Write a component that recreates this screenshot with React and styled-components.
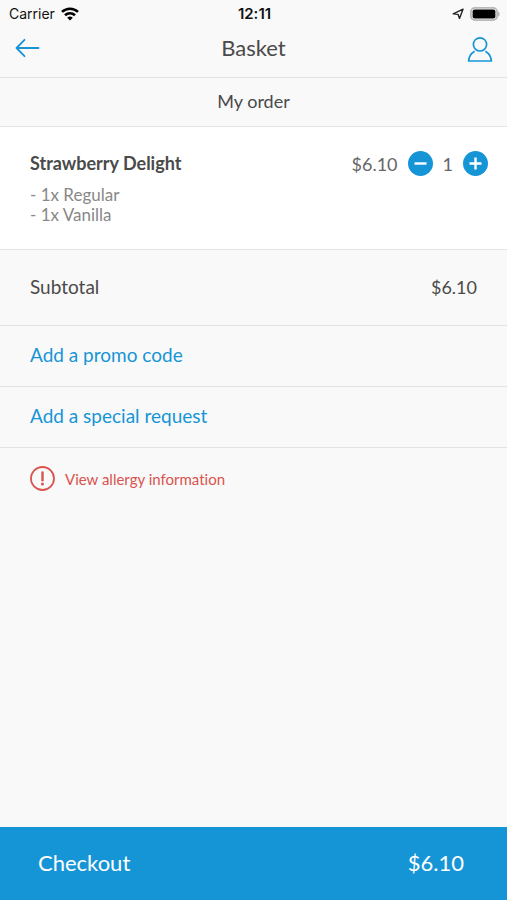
import React, { useState } from 'react';
import styled, { createGlobalStyle } from 'styled-components';

const BLUE = '#1695d6';
const PRICE = 6.1;

const GlobalStyle = createGlobalStyle`
  * {
    box-sizing: border-box;
  }
  body {
    margin: 0;
    background: #f9f9f9;
    color: #4a4a4a;
    font-family: Lato, "Noto Sans", sans-serif;
    font-size: 18px;
    font-variant-ligatures: none;
    line-height: 24px;
  }
  button {
    margin: 0;
    padding: 0;
    border: 0;
    background: none;
    color: inherit;
    font: inherit;
    cursor: pointer;
  }
  svg {
    display: block;
  }
`;

const Screen = styled.div`
  display: flex;
  flex-direction: column;
  min-height: 100vh;
`;

const StatusBar = styled.div`
  display: grid;
  grid-template-columns: 1fr auto 1fr;
  align-items: center;
  height: 28px;
  padding: 0 7px 0 9px;
  color: #111;
  font-family: Inter, sans-serif;
  font-size: 14px;
`;

const StatusSide = styled.div`
  display: flex;
  align-items: center;
  justify-content: ${props => (props.$end ? 'flex-end' : 'flex-start')};
  gap: 6px;
`;

const Clock = styled.span`
  font-size: 15px;
  font-weight: 600;
`;

const NavBar = styled.header`
  display: grid;
  grid-template-columns: 1fr auto 1fr;
  align-items: center;
  height: 50px;
  padding: 0 14px 10px;
  border-bottom: 1px solid #e4e4e4;
`;

const IconButton = styled.button`
  justify-self: ${props => (props.$end ? 'end' : 'start')};
  color: ${BLUE};
`;

const Title = styled.h1`
  margin: 0;
  font-size: 22px;
  font-weight: 400;
`;

const SectionTitle = styled.h2`
  margin: 0;
  padding: 11px 0 13px;
  border-bottom: 1px solid #e4e4e4;
  font-size: 18px;
  font-weight: 400;
  text-align: center;
`;

const Item = styled.section`
  display: flex;
  align-items: flex-start;
  justify-content: space-between;
  padding: 24px 19px 24px 30px;
  border-bottom: 1px solid #e4e4e4;
  background: #fff;
`;

const ItemName = styled.h3`
  margin: 0 0 10px;
  font-size: 18px;
  font-weight: 700;
`;

const Options = styled.ul`
  margin: 0;
  padding: 0;
  color: #888;
  font-size: 17px;
  line-height: 20px;
  list-style: none;
`;

const Quantity = styled.div`
  display: flex;
  align-items: center;
  gap: 10px;
  color: #666;
`;

const RoundButton = styled.button`
  display: grid;
  place-items: center;
  width: 25px;
  height: 25px;
  border-radius: 50%;
  background: ${BLUE};
  color: #fff;
`;

const SubtotalRow = styled.div`
  display: flex;
  align-items: center;
  justify-content: space-between;
  padding: 25px 30px 26px;
  border-bottom: 1px solid #e4e4e4;
`;

const SubtotalLabel = styled.span`
  font-size: 19px;
`;

const LinkRow = styled.button`
  padding: 17px 30px 19px;
  border-bottom: 1px solid #e4e4e4;
  color: ${BLUE};
  font-size: 19px;
  text-align: left;
`;

const Allergy = styled.button`
  display: flex;
  align-items: center;
  align-self: flex-start;
  gap: 10px;
  padding: 18px 30px;
  color: #d9534f;
  font-size: 15px;
`;

const Checkout = styled.button`
  display: flex;
  align-items: center;
  justify-content: space-between;
  margin-top: auto;
  padding: 24px 43px 25px 38px;
  background: ${BLUE};
  color: #fff;
  font-size: 22px;
`;

const money = value => `$${value.toFixed(2)}`;

function WifiIcon() {
  return (
    <svg width="18" height="14" viewBox="0 0 18 14" fill="none" stroke="#000" strokeWidth="2.6">
      <path d="M1 4.9a11.6 11.6 0 0 1 16 0" />
      <path d="M4 8.2a7.2 7.2 0 0 1 10 0" />
      <path d="M9 13.6 6.2 10.8a4 4 0 0 1 5.6 0z" fill="#000" stroke="none" />
    </svg>
  );
}

function LocationIcon() {
  return (
    <svg width="12" height="12" viewBox="0 0 12 12" fill="none" stroke="#222" strokeWidth="1.4" strokeLinejoin="round">
      <path d="M11 1.2 1.2 5.8l4.9.6 1.4 4z" />
    </svg>
  );
}

function BatteryIcon() {
  return (
    <svg width="30" height="14" viewBox="0 0 30 14">
      <rect x="0.9" y="0.9" width="26.2" height="12.2" rx="4" fill="#f9f9f9" stroke="#b8b8b8" strokeWidth="1.8" />
      <rect x="2.6" y="2.6" width="22.8" height="8.8" rx="2" fill="#000" />
      <path d="M28 4.4c2.2.9 2.2 4.3 0 5.2z" fill="#b8b8b8" />
    </svg>
  );
}

function BackIcon() {
  return (
    <svg width="26" height="20" viewBox="0 0 26 20" fill="none" stroke="currentColor" strokeWidth="1.8" strokeLinecap="round" strokeLinejoin="round">
      <path d="M24.5 10H2.5M10.5 1.8 2.5 10l8 8.2" />
    </svg>
  );
}

function UserIcon() {
  return (
    <svg width="26" height="30" viewBox="0 -4 26 30" fill="none" stroke="currentColor" strokeWidth="1.7" strokeLinejoin="round">
      <circle cx="13" cy="7.4" r="6.6" />
      <path d="M7.6 14.2C4 16.4 1.9 19.8 1.6 24h22.8c-.3-4.2-2.4-7.6-6-9.8" />
    </svg>
  );
}

function SignIcon({ plus }) {
  return (
    <svg width="15" height="15" viewBox="0 0 15 15" stroke="currentColor" strokeWidth="2.4">
      <path d={plus ? 'M1.5 7.5h12M7.5 1.5v12' : 'M1.5 7.5h12'} />
    </svg>
  );
}

function WarningIcon() {
  return (
    <svg width="25" height="25" viewBox="0 0 25 25" fill="none" stroke="currentColor" strokeLinecap="round">
      <circle cx="12.5" cy="12.5" r="11.5" strokeWidth="1.8" />
      <path d="M12.5 6.4v7.8" strokeWidth="2.4" />
      <circle cx="12.5" cy="18" r="1.5" fill="currentColor" stroke="none" />
    </svg>
  );
}

function App() {
  const [count, setCount] = useState(1);

  return (
    <Screen>
      <GlobalStyle />
      <StatusBar>
        <StatusSide>
          <span>Carrier</span>
          <WifiIcon />
        </StatusSide>
        <Clock>12:11</Clock>
        <StatusSide $end>
          <LocationIcon />
          <BatteryIcon />
        </StatusSide>
      </StatusBar>
      <NavBar>
        <IconButton aria-label="Back">
          <BackIcon />
        </IconButton>
        <Title>Basket</Title>
        <IconButton $end aria-label="Account">
          <UserIcon />
        </IconButton>
      </NavBar>
      <SectionTitle>My order</SectionTitle>
      <Item>
        <div>
          <ItemName>Strawberry Delight</ItemName>
          <Options>
            <li>- 1x Regular</li>
            <li>- 1x Vanilla</li>
          </Options>
        </div>
        <Quantity>
          <span>{money(PRICE)}</span>
          <RoundButton aria-label="Remove one" onClick={() => setCount(Math.max(0, count - 1))}>
            <SignIcon />
          </RoundButton>
          <span>{count}</span>
          <RoundButton aria-label="Add one" onClick={() => setCount(count + 1)}>
            <SignIcon plus />
          </RoundButton>
        </Quantity>
      </Item>
      <SubtotalRow>
        <SubtotalLabel>Subtotal</SubtotalLabel>
        <span>{money(PRICE * count)}</span>
      </SubtotalRow>
      <LinkRow>Add a promo code</LinkRow>
      <LinkRow>Add a special request</LinkRow>
      <Allergy>
        <WarningIcon />
        View allergy information
      </Allergy>
      <Checkout>
        <span>Checkout</span>
        <span>{money(PRICE * count)}</span>
      </Checkout>
    </Screen>
  );
}

export default App;
